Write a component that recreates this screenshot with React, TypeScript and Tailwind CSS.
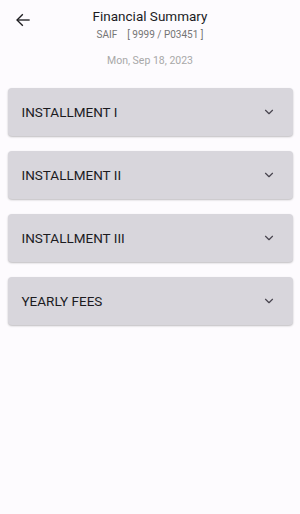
import { ChevronDown } from "lucide-react"

const sections = ["INSTALLMENT I", "INSTALLMENT II", "INSTALLMENT III", "YEARLY FEES"]

export default function App() {
  return (
    <div className="w-[300px] h-[514px] bg-[#fdfbfe] font-['Roboto',sans-serif] overflow-hidden">
      {/* Header */}
      <div className="relative h-[46px] flex flex-col items-center pt-[7px]">
        <button className="absolute left-[13px] top-[10px] p-[2px] text-[#1c1b1f]">
          <svg width="16" height="16" viewBox="0 0 24 24" fill="none" stroke="currentColor" strokeWidth="2" strokeLinecap="square">
            <path d="M21 12H4" />
            <path d="M11 4l-8 8 8 8" />
          </svg>
        </button>
        <div className="text-[13.5px] text-[#1c1b1f] leading-[18px]">Financial Summary</div>
        <div className="text-[10px] text-[#757575] mt-[3px] leading-[13px] whitespace-pre">SAIF    [ 9999 / P03451 ]</div>
      </div>
      <div className="text-center text-[10.5px] text-[#a8a8a8] leading-[13px] mt-[8px]">Mon, Sep 18, 2023</div>

      {/* Sections */}
      <div className="flex flex-col gap-[15px] px-[7.5px] mt-[21px]">
        {sections.map((s) => (
          <div
            key={s}
            className="h-[48px] bg-[#d8d6dc] rounded-[4px] shadow-[0_1px_2px_rgba(0,0,0,0.25)] flex items-center justify-between pl-[14px] pr-[17px]"
          >
            <span className="text-[13.5px] text-[#1c1b1f] font-normal">{s}</span>
            <ChevronDown size={14} strokeWidth={2} className="text-[#49454f]" />
          </div>
        ))}
      </div>
    </div>
  )
}
